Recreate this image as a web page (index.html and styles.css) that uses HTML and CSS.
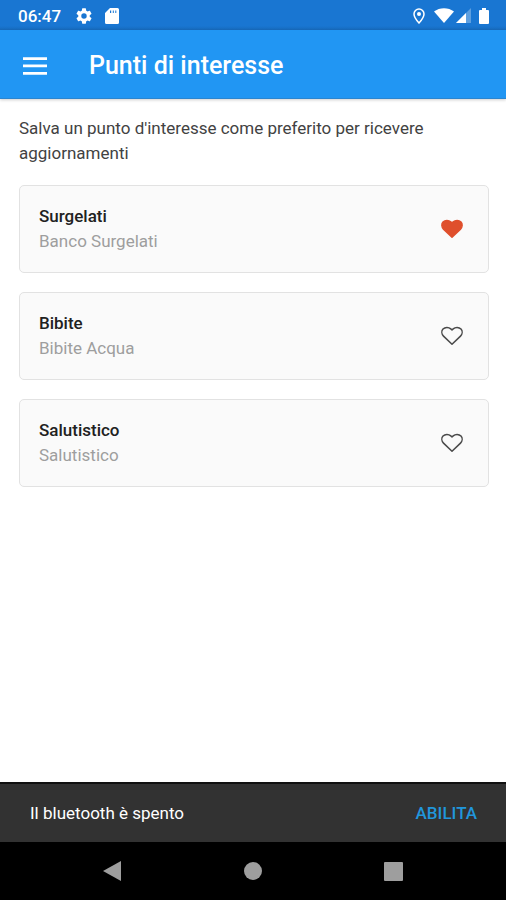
FILE: index.html
```html
<!DOCTYPE html>
<html lang="it">
<head>
<meta charset="utf-8">
<meta name="viewport" content="width=device-width, initial-scale=1">
<title>Punti di interesse</title>
<link rel="stylesheet" href="styles.css">
</head>
<body>
<div class="status">
  <span class="time">06:47</span>
  <svg class="gear" viewBox="2 2 20 20" aria-hidden="true"><path d="M19.14 12.94a7 7 0 0 0 0-1.88l2.03-1.58a.5.5 0 0 0 .12-.61l-1.92-3.32a.5.5 0 0 0-.59-.22l-2.39.96a7 7 0 0 0-1.62-.94l-.36-2.54a.5.5 0 0 0-.48-.41h-3.84a.5.5 0 0 0-.47.41l-.36 2.54a7 7 0 0 0-1.62.94l-2.39-.96a.5.5 0 0 0-.59.22L2.74 8.87a.5.5 0 0 0 .12.61l2.03 1.58a7 7 0 0 0 0 1.88l-2.03 1.58a.5.5 0 0 0-.12.61l1.92 3.32c.12.22.37.29.59.22l2.39-.96c.5.38 1.03.7 1.62.94l.36 2.54c.05.24.24.41.48.41h3.84c.24 0 .44-.17.47-.41l.36-2.54a7 7 0 0 0 1.62-.94l2.39.96c.22.08.47 0 .59-.22l1.92-3.32a.5.5 0 0 0-.12-.61zM12 15.4a3.4 3.4 0 1 1 0-6.8 3.4 3.4 0 0 1 0 6.8z"/></svg>
  <svg class="sdcard" viewBox="0 0 14 16" aria-hidden="true"><path fill-rule="evenodd" d="M5 0h7.500a1.500 1.500 0 0 1 1.500 1.500v13a1.500 1.500 0 0 1-1.500 1.500h-11A1.500 1.500 0 0 1 0 14.500V5zm0 2.500v2.500h1.200V2.500zm2.800 0v2.500h1V2.500zm2.500 0v2.500h1V2.500z"/></svg>
  <div class="signals">
    <svg class="pin" viewBox="0 0 12 16" aria-hidden="true"><path class="pin-line" d="M6 1a5 5 0 0 0-5 5c0 3.500 5 9 5 9s5-5.500 5-9a5 5 0 0 0-5-5z"/><circle cx="6" cy="6" r="2"/></svg>
    <svg class="wifi" viewBox="0 0 20 15" aria-hidden="true"><path d="M0 3.500C5.500-1 14.500-1 20 3.500L10 15z"/></svg>
    <svg class="cell" viewBox="0 0 15 15" aria-hidden="true"><path class="faint" d="M15 0v15H0z"/><path d="M10 5v10H0z"/></svg>
    <svg class="battery" viewBox="0 0 10 16" aria-hidden="true"><path d="M3 0h4v2h2a1 1 0 0 1 1 1v12a1 1 0 0 1-1 1H1a1 1 0 0 1-1-1V3a1 1 0 0 1 1-1h2z"/></svg>
  </div>
</div>
<header class="appbar">
  <button class="menu" type="button" aria-label="Menu"><svg viewBox="0 0 24 18" aria-hidden="true"><path d="M0 .3h24v2.700H0zM0 7.600h24v2.700H0zM0 15h24v2.700H0z"/></svg></button>
  <h1>Punti di interesse</h1>
</header>
<main>
  <p class="intro">Salva un punto d'interesse come preferito per ricevere aggiornamenti</p>
  <ul class="places">
    <li class="card">
      <div><h2>Surgelati</h2><p>Banco Surgelati</p></div>
      <button class="heart on" type="button" aria-pressed="true" aria-label="Preferito: Surgelati"><svg viewBox="0 0 24 20" aria-hidden="true"><path d="M12 18.300L3.500 10.100C1.500 8.100 1.300 5 3 3.100C5.100.9 8.600.9 10.800 2.900L12 4L13.200 2.900C15.400.9 18.900.9 21 3.100C22.700 5 22.500 8.100 20.500 10.100Z"/></svg></button>
    </li>
    <li class="card">
      <div><h2>Bibite</h2><p>Bibite Acqua</p></div>
      <button class="heart" type="button" aria-pressed="false" aria-label="Preferito: Bibite"><svg viewBox="0 0 24 20" aria-hidden="true"><path d="M12 18.300L3.500 10.100C1.500 8.100 1.300 5 3 3.100C5.100.9 8.600.9 10.800 2.900L12 4L13.200 2.900C15.400.9 18.900.9 21 3.100C22.700 5 22.500 8.100 20.500 10.100Z"/></svg></button>
    </li>
    <li class="card">
      <div><h2>Salutistico</h2><p>Salutistico</p></div>
      <button class="heart" type="button" aria-pressed="false" aria-label="Preferito: Salutistico"><svg viewBox="0 0 24 20" aria-hidden="true"><path d="M12 18.300L3.500 10.100C1.500 8.100 1.300 5 3 3.100C5.100.9 8.600.9 10.800 2.900L12 4L13.200 2.900C15.400.9 18.900.9 21 3.100C22.700 5 22.500 8.100 20.500 10.100Z"/></svg></button>
    </li>
  </ul>
</main>
<div class="snackbar" role="status">
  <span>Il bluetooth è spento</span>
  <button class="action" type="button">ABILITA</button>
</div>
<nav class="navbar">
  <button type="button" aria-label="Indietro"><svg viewBox="0 0 20 20" aria-hidden="true"><path d="M19 0v20L1 10z"/></svg></button>
  <button type="button" aria-label="Home"><svg viewBox="0 0 20 20" aria-hidden="true"><circle cx="10" cy="10" r="9"/></svg></button>
  <button type="button" aria-label="Recenti"><svg viewBox="0 0 20 20" aria-hidden="true"><rect width="19" height="19" x="0" y="1" rx="1"/></svg></button>
</nav>
</body>
</html>
```
FILE: styles.css
```css
* { box-sizing: border-box; }
body {
  margin: 0;
  min-height: 100vh;
  display: flex;
  flex-direction: column;
  background: #fff;
  color: #424242;
  font-family: Roboto, "Liberation Sans", sans-serif;
}
h1, h2, p, ul { margin: 0; padding: 0; }
button { padding: 0; border: 0; background: none; font: inherit; cursor: pointer; }
svg { display: block; fill: currentColor; }

.status {
  height: 30px;
  padding: 1px 17px 0 18px;
  display: flex;
  align-items: center;
  background: linear-gradient(#1976d2 86%, #176bbd);
  color: #fff;
}
.time { font-size: 17px; font-weight: 500; line-height: 20px; }
.gear { width: 16px; height: 16px; margin-left: 15px; }
.sdcard { width: 14px; height: 16px; margin-left: 13px; }
.signals { margin-left: auto; display: flex; align-items: center; }
.pin { width: 12px; height: 16px; }
.pin-line { fill: none; stroke: currentColor; stroke-width: 1.500; }
.wifi { width: 20px; height: 15px; margin-left: 9px; }
.cell { width: 15px; height: 15px; margin-left: 2px; }
.faint { opacity: 0.3; }
.battery { width: 10px; height: 16px; margin-left: 8px; }

.appbar {
  height: 69px;
  padding: 3px 23px 0;
  display: flex;
  align-items: center;
  gap: 42px;
  background: #2196f3;
  color: #fff;
  border-bottom: 1px solid #2b85cf;
  box-shadow: 0 1px 3px rgba(0, 0, 0, 0.2);
}
.menu { color: inherit; }
.menu svg { width: 24px; height: 18px; }
.appbar h1 { font-size: 25px; line-height: 32px; font-weight: 500; }

main { flex: 1; padding: 17px 17px 20px 19px; }
.intro { font-size: 17px; line-height: 25px; }
.places { margin-top: 19px; display: grid; gap: 19px; list-style: none; }
.card {
  min-height: 88px;
  padding: 18px 24px 18px 19px;
  display: flex;
  align-items: center;
  justify-content: space-between;
  background: #fafafa;
  border: 1px solid #e2e2e2;
  border-radius: 5px;
}
.card h2 { font-size: 17px; line-height: 25px; font-weight: 500; color: #212121; }
.card p { font-size: 17px; line-height: 25px; color: #9e9e9e; }
.heart { color: #4a4a4a; }
.heart svg {
  width: 24px;
  height: 20px;
  fill: none;
  stroke: currentColor;
  stroke-width: 1.500;
  stroke-linejoin: round;
}
.heart.on { color: #df4f2c; }
.heart.on svg { fill: currentColor; }

.snackbar {
  min-height: 60px;
  padding: 0 29px 0 30px;
  display: flex;
  align-items: center;
  justify-content: space-between;
  border-top: 2px solid #111;
  background: #323232;
  color: #fff;
  font-size: 17px;
  line-height: 20px;
}
.action { color: #2196dc; font-weight: 500; }

.navbar {
  height: 58px;
  padding: 0 42px;
  display: grid;
  grid-template-columns: repeat(3, 1fr);
  place-items: center;
  background: #000;
  color: #9e9e9e;
}
.navbar button { color: inherit; }
.navbar svg { width: 20px; height: 20px; }
```
